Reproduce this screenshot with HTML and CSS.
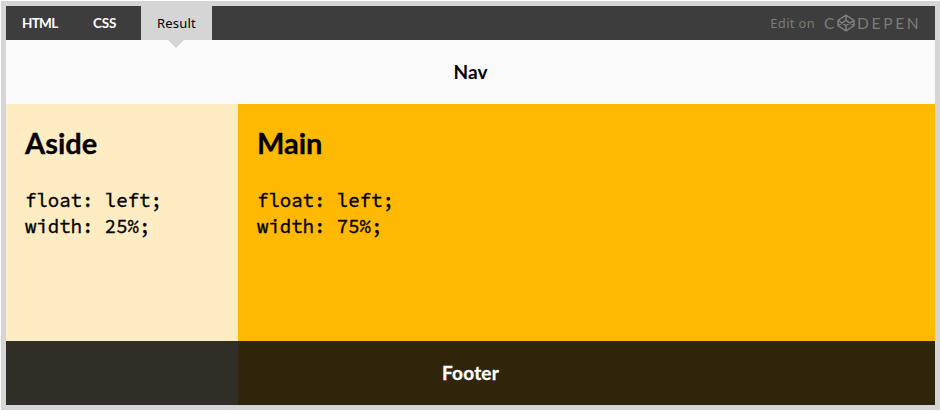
FILE: index.html
```
<!DOCTYPE html>
<html lang="en">
<head>
<meta charset="utf-8">
<title>Float layout</title>
<link rel="stylesheet" href="styles.css">
</head>
<body>
<div class="embed">
  <header class="bar">
    <div class="tabs">
      <a class="tab html">HTML</a>
      <a class="tab css">CSS</a>
      <a class="tab active">Result</a>
    </div>
    <a class="edit"><span class="label">Edit on</span>
      <span class="logo"><span class="c">C</span><svg class="mark" viewBox="0 0 20 18" width="20" height="18"><path d="M10 1.2 18 6.3v5.4l-8 5.1-8-5.1V6.3zM10 1.2V6.3M10 11.7v5.1M2 6.3l8 5.4 8-5.4M2 11.7l8-5.4 8 5.4"/></svg><span class="rest">DEPEN</span></span>
    </a>
  </header>
  <nav class="nav">Nav</nav>
  <div class="columns">
    <aside class="aside">
      <h1>Aside</h1>
      <pre>float: left;
width: 25%;</pre>
    </aside>
    <main class="main">
      <h1>Main</h1>
      <pre>float: left;
width: 75%;</pre>
    </main>
  </div>
  <footer class="footer"><div class="footer-side"></div><span>Footer</span></footer>
</div>
</body>
</html>
```
FILE: styles.css
```
* { box-sizing: border-box; }
body { margin: 0; padding: 1px; background: #fff; color: #000; font-family: Lato, sans-serif; overflow: hidden; }
.embed { width: 939px; height: 409px; border: 5px solid #d5d5d5; background: #fafafa; }
.bar { height: 34px; background: #3d3d3d; display: flex; justify-content: space-between; }
.tabs { display: flex; }
.tab { height: 34px; line-height: 34px; color: #fff; font-size: 13.5px; font-weight: 700; white-space: nowrap; }
.html { width: 71px; padding-left: 16px; letter-spacing: -.7px; }
.css { width: 64px; padding-left: 16px; letter-spacing: -.2px; }
.active { width: 71px; text-align: center; background: #d5d5d5; color: #000; font-family: "Noto Sans", sans-serif; font-weight: 400; font-size: 13px; letter-spacing: .2px; position: relative; }
.active::after { content: ""; position: absolute; left: 27px; top: 34px; border: 8px solid transparent; border-top-color: #d5d5d5; border-bottom: 0; }
.edit { display: flex; align-items: center; padding-right: 16px; color: #7c7c7c; }
.label { font: 13px "Noto Sans", sans-serif; letter-spacing: .3px; margin-right: 9px; }
.logo { display: flex; align-items: center; font-size: 15.5px; line-height: 34px; }
.c { width: 12px; }
.mark { fill: none; stroke: #7c7c7c; stroke-width: 1.6; stroke-linejoin: round; margin-right: 1px; }
.rest { width: 62px; letter-spacing: 2.7px; white-space: nowrap; }
.nav { height: 64px; text-align: center; font-weight: 700; font-size: 19px; line-height: 64px; }
.columns { height: 237px; display: flex; }
.aside { width: 232px; background: #ffecc2; padding: 0 19px; }
.main { flex: 1; background: #ffb900; padding: 0 19px; }
h1 { margin: 20px 0 0; font-size: 29px; line-height: 38px; -webkit-text-stroke: .3px #000; }
pre { margin: 25px 0 0; font: 19px/26px "Source Code Pro", "Noto Sans Mono CJK JP", "DejaVu Sans Mono", monospace; -webkit-text-stroke: .4px #000; }
.footer { height: 64px; display: grid; grid-template-columns: 232px 1fr; background: #30240a; color: #fff; font-size: 19px; font-weight: 700; line-height: 64px; text-align: center; }
.footer-side { grid-area: 1 / 1; background: #312e27; }
.footer span { grid-area: 1 / 1 / 2 / 3; letter-spacing: .2px; -webkit-text-stroke: .3px #fff; }
```
